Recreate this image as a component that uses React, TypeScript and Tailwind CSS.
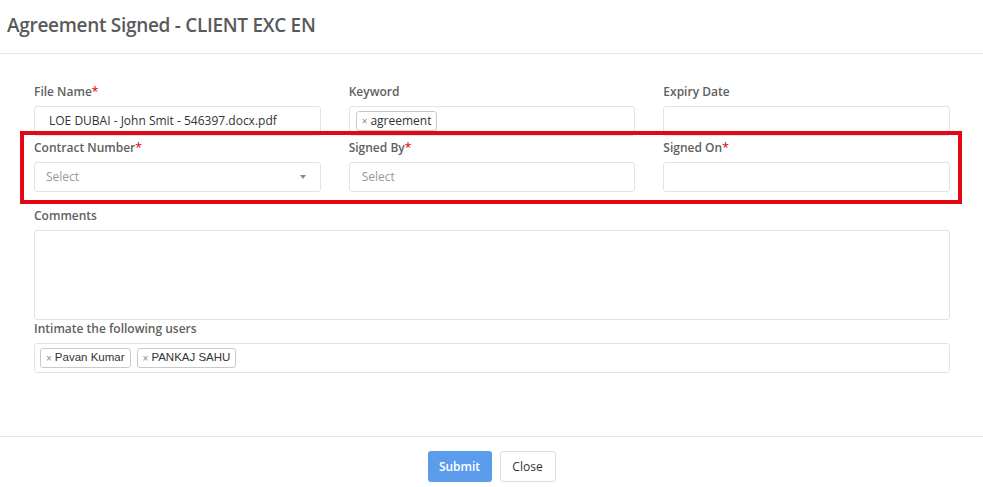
import { ReactNode } from "react";

function Label({ text, required }: { text: string; required?: boolean }) {
  return (
    <p className="h-[14px] text-[12px] font-semibold leading-[14px] text-[#5f5f5f]">
      {text}
      {required ? <span className="text-[#e0242b]">*</span> : null}
    </p>
  );
}

function Box({ children, className = "" }: { children?: ReactNode; className?: string }) {
  return (
    <div
      className={`mt-[7px] flex h-[30px] items-center rounded-[3px] border border-[#dfe4e8] bg-white px-[5px] ${className}`}
    >
      {children}
    </div>
  );
}

function Tag({ text, className = "" }: { text: string; className?: string }) {
  return (
    <span
      className={`mr-[6px] flex h-[20px] items-center rounded-[3px] border border-[#c9c9c9] px-[5px] text-[#333] ${className}`}
    >
      <span className="mr-[3px] text-[10px] text-[#888]">×</span>
      {text}
    </span>
  );
}

export default function App() {
  return (
    <div className="relative h-[487px] w-[983px] overflow-hidden bg-white font-['Open_Sans','Noto_Sans',sans-serif]">
      <div className="flex h-[54px] items-center border-b border-[#e5e5e5] pl-[7px] pb-[3px]">
        <h1 className="text-[19px] font-semibold tracking-[-0.3px] text-[#5a5a5a]">
          Agreement Signed - CLIENT EXC EN
        </h1>
      </div>

      <div className="h-[383px] border-b border-[#e5e5e5] pl-[34px] pr-[33px] pt-[31px]">
        <div className="grid grid-cols-3 gap-x-[28px] gap-y-[5px]">
          <div>
            <Label text="File Name" required />
            <Box className="px-[14px]">
              <span className="text-[12px] text-[#333]">LOE DUBAI - John Smit - 546397.docx.pdf</span>
            </Box>
          </div>
          <div>
            <Label text="Keyword" />
            <Box className="px-[6px]">
              <Tag text="agreement" className="text-[12px]" />
            </Box>
          </div>
          <div>
            <Label text="Expiry Date" />
            <Box />
          </div>
          <div>
            <Label text="Contract Number" required />
            <Box className="justify-between px-[11px]">
              <span className="text-[12px] text-[#999]">Select</span>
              <span className="mr-[3px] h-0 w-0 border-x-[3.5px] border-t-[4px] border-x-transparent border-t-[#888]" />
            </Box>
          </div>
          <div>
            <Label text="Signed By" required />
            <Box className="px-[12px]">
              <span className="text-[12px] text-[#999]">Select</span>
            </Box>
          </div>
          <div>
            <Label text="Signed On" required />
            <Box />
          </div>
        </div>

        <div className="mt-[17px]">
          <Label text="Comments" />
          <div className="mt-[7px] h-[90px] rounded-[3px] border border-[#dfe4e8]" />
        </div>

        <div className="mt-[2px]">
          <Label text="Intimate the following users" />
          <Box>
            <Tag text="Pavan Kumar" className="px-[4px] font-['Liberation_Sans',Arial,sans-serif] text-[11.5px]" />
            <Tag text="PANKAJ SAHU" className="px-[4px] font-['Liberation_Sans',Arial,sans-serif] text-[11.5px]" />
          </Box>
        </div>
      </div>

      <div className="flex justify-center gap-[8px] pt-[14px]">
        <button
          type="button"
          className="h-[31px] w-[64px] rounded-[3px] bg-[#5c9ced] text-[12px] font-semibold text-white"
        >
          Submit
        </button>
        <button
          type="button"
          className="h-[31px] w-[56px] rounded-[3px] border border-[#dcdcdc] bg-white text-[12px] text-[#333]"
        >
          Close
        </button>
      </div>

      <div className="absolute left-[20px] top-[131px] h-[73px] w-[942px] border-4 border-[#e30613]" />
    </div>
  );
}
